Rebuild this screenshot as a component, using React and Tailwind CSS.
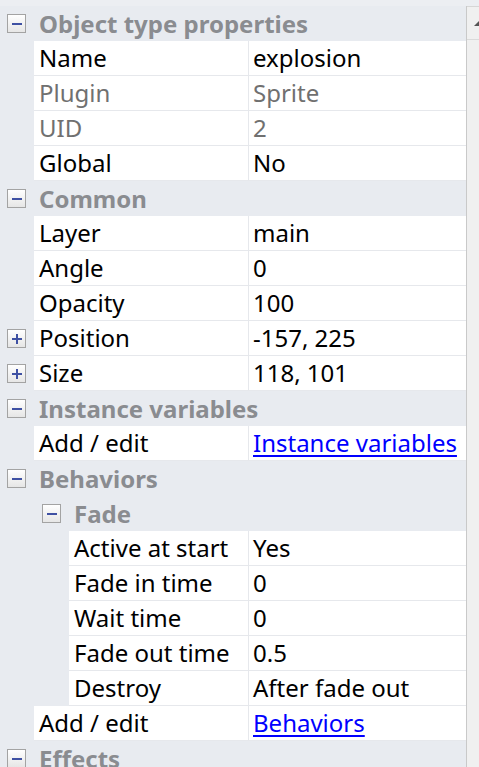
import React from 'react';

const rows = [
  { type: 'section', label: 'Object type properties', level: 0 },
  { label: 'Name', value: 'explosion' },
  { label: 'Plugin', value: 'Sprite', dim: true },
  { label: 'UID', value: '2', dim: true },
  { label: 'Global', value: 'No' },
  { type: 'section', label: 'Common', level: 0 },
  { label: 'Layer', value: 'main' },
  { label: 'Angle', value: '0' },
  { label: 'Opacity', value: '100' },
  { label: 'Position', value: '-157, 225', expand: true },
  { label: 'Size', value: '118, 101', expand: true },
  { type: 'section', label: 'Instance variables', level: 0 },
  { label: 'Add / edit', value: 'Instance variables', link: true },
  { type: 'section', label: 'Behaviors', level: 0 },
  { type: 'section', label: 'Fade', level: 1 },
  { label: 'Active at start', value: 'Yes', level: 1 },
  { label: 'Fade in time', value: '0', level: 1 },
  { label: 'Wait time', value: '0', level: 1 },
  { label: 'Fade out time', value: '0.5', level: 1 },
  { label: 'Destroy', value: 'After fade out', level: 1 },
  { label: 'Add / edit', value: 'Behaviors', link: true },
  { type: 'section', label: 'Effects', level: 0 },
];

const ToggleBox = ({ plus }) => (
  <div className="w-[19px] h-[19px] shrink-0 border border-[#a3a3a3] bg-gradient-to-b from-[#ffffff] to-[#e6e6e6] flex items-center justify-center relative">
    <div className="w-[10px] h-[2px] bg-[#3f51a3]" />
    {plus && <div className="absolute w-[2px] h-[10px] bg-[#3f51a3]" />}
  </div>
);

const Section = ({ label, level }) => (
  <div className="flex items-center h-[35px]">
    <div className={level ? 'w-[42px] shrink-0' : 'w-[7px] shrink-0'} />
    <ToggleBox />
    <span className="ml-[13px] font-bold text-[#8a8c90] text-[24px] whitespace-nowrap">{label}</span>
  </div>
);

const Prop = ({ label, value, dim, link, expand, level }) => (
  <div className="flex h-[35px]">
    <div className={(level ? 'w-[69px]' : 'w-[34px]') + ' shrink-0 flex items-center pl-[7px]'}>
      {expand && <ToggleBox plus />}
    </div>
    <div className="flex flex-1 bg-white border-b border-[#e6e8ec]">
      <div className={(level ? 'w-[180px]' : 'w-[215px]') + ' shrink-0 border-r border-[#e6e8ec] flex items-center pl-[5px] whitespace-nowrap ' + (dim ? 'text-[#707070]' : 'text-black')}>
        {label}
      </div>
      <div className={'flex items-center pl-[4px] whitespace-nowrap ' + (dim ? 'text-[#707070]' : 'text-black')}>
        {link ? <span className="text-[#0000ff] underline underline-offset-[3px]">{value}</span> : value}
      </div>
    </div>
  </div>
);

export default function App() {
  return (
    <div className="w-[479px] h-[767px] overflow-hidden bg-[#e8ebf0] flex flex-col text-[24px] leading-none" style={{ fontFamily: '"Noto Sans", "Open Sans", sans-serif' }}>
      <div className="h-[6px] shrink-0 bg-[#eceef2]" />
      <div className="flex flex-1">
        <div className="w-[466px] shrink-0 flex flex-col">
          {rows.map((r, i) =>
            r.type === 'section' ? (
              <Section key={i} label={r.label} level={r.level} />
            ) : (
              <Prop key={i} {...r} />
            )
          )}
        </div>
        <div className="flex-1 bg-[#f0f0f0] border-l border-[#c9c9c9] flex flex-col">
          <div className="h-[34px] border-b border-[#dadada] border-t border-t-[#d6d6d6] flex items-center justify-end">
            <div className="w-0 h-0 border-l-[5px] border-l-transparent border-b-[5px] border-b-[#555]" />
          </div>
        </div>
      </div>
    </div>
  );
}
